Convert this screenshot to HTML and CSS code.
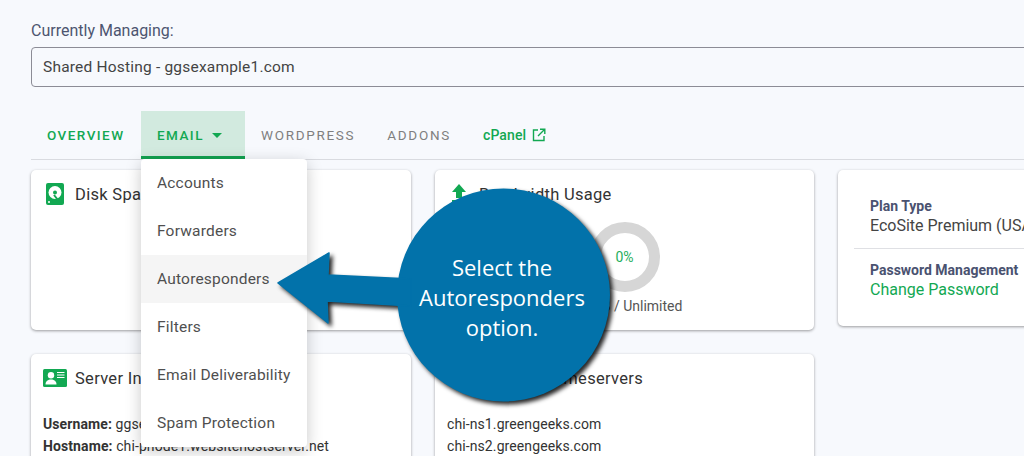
FILE: index.html
```html
<!DOCTYPE html>
<html lang="en">
<head>
<meta charset="utf-8">
<title>Currently Managing</title>
<link rel="stylesheet" href="styles.css">
</head>
<body>
<main class="page">
  <label class="manage-label">Currently Managing:</label>
  <div class="select">Shared Hosting - ggsexample1.com</div>

  <nav class="tabs">
    <a class="tab tab-first">OVERVIEW</a>
    <div class="tab tab-active">EMAIL <span class="caret"></span>
      <ul class="menu">
        <li>Accounts</li>
        <li>Forwarders</li>
        <li class="hover">Autoresponders</li>
        <li>Filters</li>
        <li>Email Deliverability</li>
        <li>Spam Protection</li>
      </ul>
    </div>
    <a class="tab tab-muted">WORDPRESS</a>
    <a class="tab tab-muted">ADDONS</a>
    <a class="tab tab-cpanel">cPanel
      <svg class="ext" viewBox="0 0 14 14" width="14" height="14"><path d="M6 2H1.500v10.500H12V8M8 1.200h4.800V6M12.500 1.500 6 8" fill="none" stroke="currentColor" stroke-width="1.400"/></svg>
    </a>
  </nav>

  <div class="grid">
    <section class="card">
      <h2 class="card-title">
        <svg class="ico" viewBox="0 0 18 22" width="18" height="22"><rect width="18" height="22" rx="2" fill="#12a852"/><circle cx="9" cy="9.500" r="6.500" fill="#fff"/><circle cx="9" cy="9.500" r="2" fill="#12a852"/><path d="M8 12l4 5" stroke="#12a852" stroke-width="2"/><circle cx="3" cy="19" r="1" fill="#fff"/></svg>
        Disk Space Usage
      </h2>
      <div class="usage">
        <div class="ring"><span>0%</span></div>
        <p>0.0 MB / Unlimited</p>
      </div>
    </section>

    <section class="card">
      <h2 class="card-title">
        <svg class="ico" viewBox="0 0 18 22" width="18" height="22"><path d="M9 1l7 8h-4v6H6V9H2z" fill="#12a852"/><rect x="2" y="17" width="14" height="3" fill="#12a852"/></svg>
        Bandwidth Usage
      </h2>
      <div class="usage">
        <div class="ring"><span>0%</span></div>
        <p>0.0 MB / Unlimited</p>
      </div>
    </section>

    <section class="card card-plan">
      <div class="plan-row">
        <h3>Plan Type</h3>
        <p>EcoSite Premium (USA)</p>
      </div>
      <div class="plan-row plan-row-last">
        <h3>Password Management</h3>
        <a class="link">Change Password</a>
      </div>
    </section>

    <section class="card card-low">
      <h2 class="card-title card-title-wide">
        <svg class="ico" viewBox="0 0 24 18" width="24" height="18"><rect width="24" height="18" rx="1.500" fill="#12a852"/><circle cx="8" cy="6.200" r="3.200" fill="#fff"/><path d="M2.500 15.500c0-3.400 2.500-5 5.500-5s5.500 1.600 5.500 5z" fill="#fff"/><path d="M14 3.500h7.500M14 6h7.500M14 8.500h7.500" stroke="#fff" stroke-width="1"/></svg>
        Server Information
      </h2>
      <p class="info"><b>Username:</b> ggsexample1</p>
      <p class="info"><b>Hostname:</b> chi-pnode1.websitehostserver.net</p>
    </section>

    <section class="card card-low">
      <h2 class="card-title">
        <svg class="ico" viewBox="0 0 18 22" width="18" height="22"><rect y="3" width="18" height="16" rx="2" fill="#12a852"/></svg>
        Domain Nameservers
      </h2>
      <p class="info">chi-ns1.greengeeks.com</p>
      <p class="info">chi-ns2.greengeeks.com</p>
    </section>
  </div>
</main>

<aside class="callout">
  <svg class="callout-art" viewBox="0 0 350 220" width="350" height="220">
    <g fill="#0272aa">
      <circle cx="227.500" cy="107" r="106.500"/>
      <path d="M2 95 53 65 52 87 135 91V118L51 113 52 135z" stroke="#0272aa" stroke-width="1.500" stroke-linejoin="round"/>
    </g>
  </svg>
  <p class="callout-text">Select the<br>Autoresponders<br>option.</p>
</aside>
</body>
</html>
```
FILE: styles.css
```css
* { box-sizing: border-box; }

html, body {
  margin: 0;
  height: 456px;
  overflow: hidden;
}

body {
  background: #f7f9fd;
  font-family: Roboto, "Liberation Sans", sans-serif;
  color: #3f3f3f;
  position: relative;
}

.page {
  padding: 22px 0 0 31px;
  width: 1300px;
}

.manage-label {
  display: block;
  height: 18px;
  line-height: 18px;
  font-size: 16px;
  color: #4d5570;
}

.select {
  width: 1040px;
  height: 40px;
  margin-top: 7px;
  padding-left: 11px;
  line-height: 38px;
  font-size: 15.500px;
  letter-spacing: .2px;
  border: 1px solid #8c8c96;
  border-radius: 4px;
  color: #444;
}

.tabs {
  display: flex;
  height: 49px;
  margin-top: 24px;
  border-bottom: 1px solid #d9dbe0;
  width: 1040px;
}

.tab {
  display: block;
  position: relative;
  flex: none;
  height: 48px;
  padding: 0 16px;
  line-height: 48px;
  font-size: 13.500px;
  font-weight: 500;
  letter-spacing: 1.450px;
  color: #12a852;
}

.tab-first { width: 110px; }

.tab-active {
  background: #d2eadf;
  border-bottom: 3px solid #12a150;
  width: 104px;
}

.tab-muted {
  color: #7f7f7f;
  font-weight: 400;
  letter-spacing: 1.700px;
}

.tab-cpanel {
  display: flex;
  align-items: center;
  gap: 6px;
  padding-left: 16px;
  font-size: 14px;
  letter-spacing: .1px;
}

.caret {
  display: inline-block;
  margin-left: 3px;
  vertical-align: 2px;
  border-left: 5px solid transparent;
  border-right: 5px solid transparent;
  border-top: 5px solid #12a852;
}

.menu {
  position: absolute;
  z-index: 2;
  left: 0;
  top: 48px;
  width: 166px;
  margin: 0;
  padding: 0;
  list-style: none;
  background: #fff;
  border-radius: 4px;
  box-shadow: 0 4px 16px rgba(0, 0, 0, .22);
}

.menu li {
  height: 48px;
  padding-left: 16px;
  line-height: 48px;
  font-size: 15.500px;
  font-weight: 400;
  letter-spacing: .2px;
  color: #4f4f4f;
}

.menu .hover { background: #f5f5f5; }

.grid {
  display: grid;
  grid-template-columns: 380px 379px 380px;
  column-gap: 24px;
  row-gap: 24px;
  margin-top: 10px;
  align-items: start;
}

.card {
  height: 160px;
  padding: 13px 12px;
  background: #fff;
  border-radius: 5px;
  box-shadow: 0 1px 3px rgba(0, 0, 0, .38);
}

.card-low { height: 140px; }

.card-title {
  display: flex;
  align-items: center;
  gap: 11px;
  height: 22px;
  margin: 0 0 0 3px;
  font-size: 16.500px;
  font-weight: 400;
  letter-spacing: .3px;
  color: #333;
}

.card-title-wide { margin-left: 0; gap: 8px; }

.usage {
  margin-top: 17px;
  text-align: center;
}

.usage p {
  margin: 6px 0 0;
  font-size: 14px;
  line-height: 16px;
  color: #555;
}

.ring {
  display: flex;
  align-items: center;
  justify-content: center;
  width: 70px;
  height: 70px;
  margin: 0 auto;
  border: 11px solid #d6d6d6;
  border-radius: 50%;
  font-size: 14px;
  color: #1fae5c;
}

.card-plan {
  height: 156px;
  padding: 26px 16px 0;
}

.plan-row {
  height: 53px;
  padding-left: 16px;
  border-bottom: 1px solid #dfe0e4;
}

.plan-row-last {
  padding-top: 11px;
  border-bottom: 0;
}

.plan-row h3 {
  margin: 0;
  font-size: 14px;
  line-height: 20px;
  font-weight: 700;
  color: #4a5270;
}

.plan-row p, .link {
  display: block;
  margin: 0;
  font-size: 16px;
  line-height: 20px;
  color: #444;
}

.link { color: #12a852; }

.info {
  margin: 0;
  font-size: 14px;
  line-height: 22px;
  letter-spacing: .1px;
  color: #333;
}

.card-title + .info { margin-top: 24px; }

.info b { font-weight: 700; }

.callout {
  position: absolute;
  z-index: 3;
  left: 276px;
  top: 188px;
  width: 350px;
  height: 220px;
}

.callout-art {
  display: block;
  filter: drop-shadow(3px 3px 2px rgba(0, 0, 0, .85));
}

.callout-text {
  position: absolute;
  left: 120px;
  top: 64px;
  width: 212px;
  margin: 0;
  text-align: center;
  font-family: "Open Sans", sans-serif;
  font-size: 22px;
  line-height: 30px;
  color: #fff;
}
```
